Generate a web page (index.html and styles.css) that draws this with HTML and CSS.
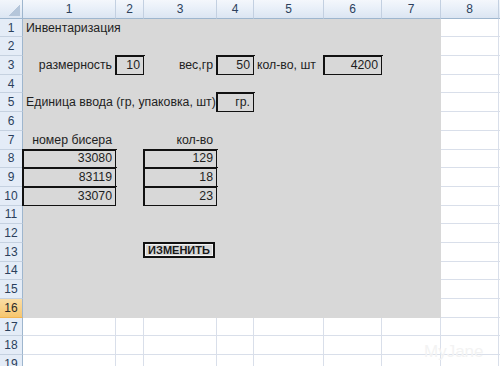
FILE: index.html
```html
<!DOCTYPE html>
<html lang="ru">
<head>
    <meta charset="UTF-8">
    <title>Инвентаризация</title>
    <link rel="stylesheet" href="styles.css">
</head>
<body>
    <div class="sheet">
        <!-- column headers -->
        <div class="corner"></div>
        <div class="ch">1</div><div class="ch">2</div><div class="ch">3</div><div class="ch">4</div>
        <div class="ch">5</div><div class="ch">6</div><div class="ch">7</div><div class="ch">8</div><div class="ch"></div>

        <!-- 1 -->
        <div class="rh">1</div>
        <div class="cell g span2">Инвентаризация</div><div class="cell g"></div>
        <div class="cell g"></div><div class="cell g"></div><div class="cell g"></div><div class="cell g"></div><div class="cell"></div><div class="cell"></div>
        <!-- 2 -->
        <div class="rh">2</div>
        <div class="cell g"></div><div class="cell g"></div><div class="cell g"></div><div class="cell g"></div>
        <div class="cell g"></div><div class="cell g"></div><div class="cell g"></div><div class="cell"></div><div class="cell"></div>
        <!-- 3 -->
        <div class="rh">3</div>
        <div class="cell g r">размерность</div><div class="cell g r box">10</div><div class="cell g r">вес,гр</div><div class="cell g r box">50</div>
        <div class="cell g">кол-во, шт</div><div class="cell g r box">4200</div><div class="cell g"></div><div class="cell"></div><div class="cell"></div>
        <!-- 4 -->
        <div class="rh">4</div>
        <div class="cell g"></div><div class="cell g"></div><div class="cell g"></div><div class="cell g"></div>
        <div class="cell g"></div><div class="cell g"></div><div class="cell g"></div><div class="cell"></div><div class="cell"></div>
        <!-- 5 -->
        <div class="rh">5</div>
        <div class="cell g span3">Единица ввода (гр, упаковка, шт)</div><div class="cell g r box">гр.</div>
        <div class="cell g"></div><div class="cell g"></div><div class="cell g"></div><div class="cell"></div><div class="cell"></div>
        <!-- 6 -->
        <div class="rh">6</div>
        <div class="cell g"></div><div class="cell g"></div><div class="cell g"></div><div class="cell g"></div>
        <div class="cell g"></div><div class="cell g"></div><div class="cell g"></div><div class="cell"></div><div class="cell"></div>
        <!-- 7 -->
        <div class="rh">7</div>
        <div class="cell g r">номер бисера</div><div class="cell g"></div><div class="cell g r">кол-во</div><div class="cell g"></div>
        <div class="cell g"></div><div class="cell g"></div><div class="cell g"></div><div class="cell"></div><div class="cell"></div>
        <!-- 8 -->
        <div class="rh">8</div>
        <div class="cell g r box">33080</div><div class="cell g"></div><div class="cell g r box">129</div><div class="cell g"></div>
        <div class="cell g"></div><div class="cell g"></div><div class="cell g"></div><div class="cell"></div><div class="cell"></div>
        <!-- 9 -->
        <div class="rh">9</div>
        <div class="cell g r box">83119</div><div class="cell g"></div><div class="cell g r box">18</div><div class="cell g"></div>
        <div class="cell g"></div><div class="cell g"></div><div class="cell g"></div><div class="cell"></div><div class="cell"></div>
        <!-- 10 -->
        <div class="rh">10</div>
        <div class="cell g r box">33070</div><div class="cell g"></div><div class="cell g r box">23</div><div class="cell g"></div>
        <div class="cell g"></div><div class="cell g"></div><div class="cell g"></div><div class="cell"></div><div class="cell"></div>
        <!-- 11 -->
        <div class="rh">11</div>
        <div class="cell g"></div><div class="cell g"></div><div class="cell g"></div><div class="cell g"></div>
        <div class="cell g"></div><div class="cell g"></div><div class="cell g"></div><div class="cell"></div><div class="cell"></div>
        <!-- 12 -->
        <div class="rh">12</div>
        <div class="cell g"></div><div class="cell g"></div><div class="cell g"></div><div class="cell g"></div>
        <div class="cell g"></div><div class="cell g"></div><div class="cell g"></div><div class="cell"></div><div class="cell"></div>
        <!-- 13 -->
        <div class="rh">13</div>
        <div class="cell g"></div><div class="cell g"></div><div class="cell g btn-cell"><div class="btn">ИЗМЕНИТЬ</div></div><div class="cell g"></div>
        <div class="cell g"></div><div class="cell g"></div><div class="cell g"></div><div class="cell"></div><div class="cell"></div>
        <!-- 14 -->
        <div class="rh">14</div>
        <div class="cell g"></div><div class="cell g"></div><div class="cell g"></div><div class="cell g"></div>
        <div class="cell g"></div><div class="cell g"></div><div class="cell g"></div><div class="cell"></div><div class="cell"></div>
        <!-- 15 -->
        <div class="rh">15</div>
        <div class="cell g"></div><div class="cell g"></div><div class="cell g"></div><div class="cell g"></div>
        <div class="cell g"></div><div class="cell g"></div><div class="cell g"></div><div class="cell"></div><div class="cell"></div>
        <!-- 16 -->
        <div class="rh sel">16</div>
        <div class="cell g"></div><div class="cell g"></div><div class="cell g"></div><div class="cell g"></div>
        <div class="cell g"></div><div class="cell g"></div><div class="cell g"></div><div class="cell"></div><div class="cell"></div>
        <!-- 17 -->
        <div class="rh">17</div>
        <div class="cell"></div><div class="cell"></div><div class="cell"></div><div class="cell"></div>
        <div class="cell"></div><div class="cell"></div><div class="cell"></div><div class="cell"></div><div class="cell"></div>
        <!-- 18 -->
        <div class="rh">18</div>
        <div class="cell"></div><div class="cell"></div><div class="cell"></div><div class="cell"></div>
        <div class="cell"></div><div class="cell"></div><div class="cell"></div><div class="cell"></div><div class="cell"></div>
        <!-- 19 -->
        <div class="rh">19</div>
        <div class="cell"></div><div class="cell"></div><div class="cell"></div><div class="cell"></div>
        <div class="cell"></div><div class="cell"></div><div class="cell"></div><div class="cell"></div><div class="cell"></div>
    </div>
    <div class="wm">MyJane</div>
</body>
</html>
```

FILE: styles.css
```css
* {
    margin: 0;
    padding: 0;
    box-sizing: border-box;
}
body {
    width: 500px;
    height: 366px;
    overflow: hidden;
    background: #fff;
    position: relative;
    font-family: "Liberation Sans", Arial, sans-serif;
}
.sheet {
    display: grid;
    grid-template-columns: 23px 93px 28px 73px 37px 70px 58px 59px 58px 1fr;
    grid-auto-rows: 18.7px;
    width: 500px;
    height: 366px;
    overflow: hidden;
    font-size: 12.3px;
    color: #1e1e1e;
}
.corner, .ch, .rh {
    display: flex;
    align-items: center;
    justify-content: center;
    color: #2b3f5c;
    font-size: 12px;
}
.corner {
    position: relative;
    background: linear-gradient(#f2f6fb, #dce6f3);
    border-right: 1px solid #9eb6ce;
    border-bottom: 1px solid #9eb6ce;
}
.corner::after {
    content: "";
    position: absolute;
    right: 2px;
    bottom: 2px;
    width: 11px;
    height: 11px;
    background: linear-gradient(135deg, transparent 50%, #b5c6da 50%);
}
.ch {
    background: linear-gradient(#f4f7fc 0%, #e8eff8 50%, #dbe5f2 100%);
    border-right: 1px solid #c3d0e1;
    border-bottom: 1px solid #9eb6ce;
}
.rh {
    background: #e4ecf7;
    border-right: 1px solid #9eb6ce;
    border-bottom: 1px solid #c5d1e0;
}
.rh.sel {
    background: linear-gradient(#fbdda4, #f6c66f);
    border-bottom: 1px solid #f2b552;
    color: #2a2a2a;
}
.cell {
    display: flex;
    align-items: center;
    padding: 0 3px;
    white-space: nowrap;
    min-width: 0;
    border-right: 1px solid #d9dfea;
    border-bottom: 1px solid #d9dfea;
}
.span2 {
    grid-column: span 2;
}
.span3 {
    grid-column: span 3;
}
.g {
    background: #d8d8d8;
    border-color: #d8d8d8;
}
.r {
    justify-content: flex-end;
}
.box {
    outline: 2px solid #111;
    outline-offset: -1px;
}
.btn-cell {
    align-items: flex-start;
    padding: 0;
}
.btn {
    width: 72px;
    height: 16px;
    margin: -1px 0 0 -1px;
    border: 2px solid #111;
    box-shadow: inset 0 0 0 1px #f2f2f2;
    font-size: 11px;
    font-weight: bold;
    line-height: 12px;
    text-align: center;
    color: #1a1a1a;
}
.wm {
    position: absolute;
    left: 424px;
    top: 342px;
    font-size: 17px;
    color: #f3f3f3;
}
```
